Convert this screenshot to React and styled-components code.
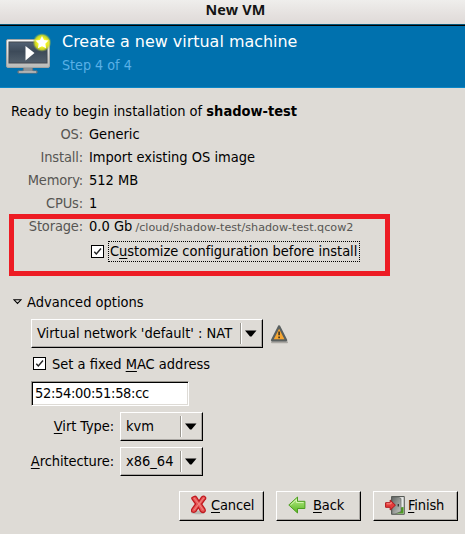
import React from "react";
import styled, { createGlobalStyle } from "styled-components";

const GlobalStyle = createGlobalStyle`
  * { box-sizing: border-box; }
  html, body { margin: 0; padding: 0; overflow: hidden; }
  body { background: #dedbd6; }
  svg { display: block; flex: none; }
`;

const Window = styled.div`
  width: 465px;
  height: 534px;
  display: flex;
  flex-direction: column;
  background: #dedbd6;
  color: #000;
  font: 14.5px/23px "DejaVu Sans Condensed", "DejaVu Sans", sans-serif;
  font-stretch: condensed;
  white-space: nowrap;
  overflow: hidden;
`;

const TitleBar = styled.div`
  height: 24px;
  flex: none;
  padding-left: 6px;
  text-align: center;
  background: linear-gradient(#efeeec, #e5e1df 60%, #dfdad8);
  font: bold 14.4px/20px "Noto Sans", sans-serif;
  letter-spacing: 0.2px;
  color: #141414;
`;

const Banner = styled.header`
  height: 64px;
  flex: none;
  display: flex;
  background: #0071ae;
  border-top: 1px solid #075577;
  box-shadow: inset 0 1px #000, inset 0 -1px #0b87c7;
  padding: 5px 0 0 4px;
`;

const BannerText = styled.div`
  margin-left: 10px;
  font-family: "DejaVu Sans", sans-serif;
  font-stretch: normal;
`;

const Heading = styled.h1`
  margin: 0;
  font-size: 15.95px;
  font-weight: normal;
  line-height: 23px;
  color: #fff;
`;

const Step = styled.div`
  font: 14.2px/22px "DejaVu Sans Condensed", "DejaVu Sans", sans-serif;
  font-stretch: condensed;
  margin-top: 1px;
  color: #59b0e6;
`;

const Content = styled.main`
  display: flex;
  flex-direction: column;
  height: 397px;
  padding-top: 12px;
`;

const Ready = styled.div`
  height: 23px;
  padding-left: 11px;
`;

const Row = styled.div`
  height: 23px;
  display: grid;
  grid-template-columns: 83px 1fr;
  column-gap: 6px;
`;

const Key = styled.span`
  text-align: right;
  letter-spacing: -0.15px;
  color: #575653;
`;

const Path = styled.small`
  font: 11.18px "DejaVu Sans", sans-serif;
  font-stretch: normal;
  margin-left: -1px;
  color: #575653;
`;

const Highlighted = styled.section`
  position: relative;
  height: 75px;
`;

const RedFrame = styled.div`
  position: absolute;
  left: 9px;
  top: -1px;
  width: 381px;
  height: 62px;
  border: 5px solid #ed1c24;
`;

const CheckLine = styled.label`
  display: flex;
  align-items: center;
  height: ${(p) => p.$height}px;
  padding-left: ${(p) => p.$indent}px;
  gap: ${(p) => p.$gap}px;
  margin-top: ${(p) => p.$top || 0}px;
`;

const CheckLabel = styled.span`
  line-height: 23px;
  padding-top: 1px;
`;

const Box = styled.span`
  width: 13px;
  height: 13px;
  flex: none;
  border: 1px solid #000;
  background: #fff;
`;

const Focus = styled.span`
  width: 252px;
  height: 21px;
  border: 1px dotted #000;
  padding-left: 1px;
  line-height: 19px;
  letter-spacing: -0.03px;
`;

const Mnemonic = styled.span`
  text-decoration: underline 1px;
  text-underline-offset: 2px;
  text-decoration-skip-ink: none;
`;

const Expander = styled.div`
  display: flex;
  align-items: center;
  height: 24px;
  padding-left: 13px;
  gap: 5px;
`;

const Line = styled.div`
  display: flex;
  align-items: center;
  height: ${(p) => p.$height}px;
  padding-left: ${(p) => p.$indent || 0}px;
  margin-top: ${(p) => p.$top}px;
`;

const FieldLabel = styled.span`
  width: 114px;
  margin-right: 6px;
  text-align: right;
  letter-spacing: -0.08px;
`;

const Raised = styled.span`
  display: flex;
  align-items: center;
  border-style: solid;
  border-width: 1px;
  border-color: #fff #000 #000 #fff;
  box-shadow: inset -1px -1px #aaa7a3;
`;

const Combo = styled(Raised)`
  width: ${(p) => p.$width}px;
  height: 29px;
  padding-left: 5px;
  justify-content: space-between;
`;

const ArrowCell = styled.span`
  display: flex;
  align-items: center;
  width: 22px;
  height: 21px;
  padding-left: 4px;
  border-left: 1px solid #99968f;
  box-shadow: inset 1px 0 #fff;
`;

const Entry = styled.div`
  width: 158px;
  height: 25px;
  margin: 6px 0 0 31px;
  padding-left: 3px;
  line-height: 23px;
  letter-spacing: -0.32px;
  background: #fff;
  border: 1px solid;
  border-color: #99968f #fff #fff #99968f;
  box-shadow: inset 1px 1px #000, inset -1px -1px #dedbd6;
`;

const Actions = styled.footer`
  display: flex;
  justify-content: flex-end;
  gap: 12px;
  padding: 6px 7px 0 0;
`;

const Button = styled(Raised)`
  width: 85px;
  height: 30px;
  padding: 0 0 2px 11px;
  gap: ${(p) => p.$gap}px;
  letter-spacing: -0.15px;
`;

const VmIcon = () => (
  <svg width="48" height="48" viewBox="4 30 48 48">
    <defs>
      <linearGradient id="screen" x1="0" y1="0" x2="0" y2="1">
        <stop stopColor="#526275" /><stop offset="0.45" stopColor="#3d4a59" /><stop offset="1" stopColor="#53606c" />
      </linearGradient>
      <linearGradient id="bezel" x1="0" y1="0" x2="0" y2="1">
        <stop stopColor="#f7f7f7" /><stop offset="1" stopColor="#b9bab7" />
      </linearGradient>
      <radialGradient id="glow">
        <stop offset="0.4" stopColor="#ffff20" /><stop offset="0.75" stopColor="#dfe41b" stopOpacity="0.85" /><stop offset="1" stopColor="#7ea558" stopOpacity="0" />
      </radialGradient>
    </defs>
    <path d="M24 67h8l1 4h4v2H18v-2h5z" fill="#8d9295" stroke="#74777a" />
    <path d="M19 72h17" stroke="#d4d5d3" />
    <rect x="6.5" y="39.5" width="43" height="28" rx="1.5" fill="url(#bezel)" stroke="#a1a5a5" />
    <rect x="9" y="42" width="38" height="21" fill="url(#screen)" stroke="#424951" />
    <path d="M25.5 46v14.5L34.5 53z" fill="#fff" />
    <circle cx="42" cy="42.5" r="9.5" fill="url(#glow)" />
    <path d="M42 36l2 4 4.5.6-3.2 3.1.8 4.6-4.1-2.1-4.1 2.1.8-4.6-3.2-3.1L40 40z" fill="#fff" />
  </svg>
);

const Check = () => (
  <Box>
    <svg width="11" height="11" viewBox="0 0 11 11">
      <path d="M2.3 5.8l2 2.2L9 2.5" fill="none" stroke="#222" strokeWidth="1.4" />
    </svg>
  </Box>
);

const ComboBox = ({ width, children }) => (
  <Combo $width={width}>
    {children}
    <ArrowCell>
      <svg width="12" height="7" viewBox="0 0 12 7"><path d="M0 .5h11.5L6.5 6.5h-1.5z" /></svg>
    </ArrowCell>
  </Combo>
);

const WarningIcon = () => (
  <svg width="20" height="20" viewBox="0 0 20 20">
    <path d="M2 18.3h15" stroke="#aaa7a2" strokeWidth="2" strokeLinecap="round" />
    <path d="M9.1 2.3L2 16.3h14.2z" fill="#f6a632" stroke="#5a6060" strokeWidth="2.2" strokeLinejoin="round" />
    <path d="M9.1 7.5v3.8M9.1 12.6v1.7" stroke="#352a1b" strokeWidth="1.5" />
  </svg>
);

const CancelIcon = () => (
  <svg width="16" height="20" viewBox="0 0 16 20">
    <ellipse cx="7" cy="17.5" rx="7" ry="1.7" fill="#bbb8b4" />
    <path d="M1.2 2.5Q4 .2 5.5 2.2L8 6l2.7-4Q13 .2 14.6 2.5q.5 1.5-1 2.5L10.6 9l3.2 4.8q1.4 3-1.5 3.7-1.8.2-2.8-1.4L7.4 12.4 5 16.2q-1.3 1.7-3.7.8-1.6-1.2-.1-3.4L4.6 9 1.3 4.4Q.4 3.3 1.2 2.5z" fill="#e95a5a" stroke="#c0181e" strokeWidth="1.3" />
    <path d="M3 3l4.9 6L3 15M12.8 3L8 9l4.1 6" fill="none" stroke="#f08a86" strokeWidth="0.9" />
  </svg>
);

const BackIcon = () => (
  <svg width="18" height="18" viewBox="0 0 18 18">
    <defs>
      <linearGradient id="leaf" x1="0" y1="0" x2="0" y2="1"><stop stopColor="#c0ee91" /><stop offset="1" stopColor="#54b51d" /></linearGradient>
    </defs>
    <path d="M.8 9L9.5 1v4.3h7.4v7.2H9.5V17z" fill="url(#leaf)" stroke="#4d9e20" strokeLinejoin="round" />
    <path d="M2.5 9l6-5.5v3h7" fill="none" stroke="#d2f5ad" />
  </svg>
);

const FinishIcon = () => (
  <svg width="20" height="19" viewBox="0 0 20 19">
    <defs>
      <linearGradient id="door" x1="0" y1="0" x2="1" y2="1"><stop stopColor="#626765" /><stop offset="1" stopColor="#c7cac4" /></linearGradient>
    </defs>
    <path d="M6.5.5h12.8v17.8H6.5z" fill="#ddd" stroke="#555954" />
    <path d="M12 2h6v10h-6z" fill="#e8ebe8" />
    <path d="M11 12l7.5-1v6.5H8z" fill="#4c9b20" />
    <path d="M7 1h6l3 1.5v13L10 18H7z" fill="url(#door)" stroke="#626561" strokeWidth=".7" />
    <path d="M13.3 8v2.5" stroke="#333" strokeWidth="1.3" />
    <path d="M.6 6.7h4.6V4l5.2 5.2L5.2 14v-2.7H.6z" fill="#e53b3b" stroke="#af171d" strokeLinejoin="round" />
    <path d="M1.5 7.8h4.6V6" fill="none" stroke="#ff9186" />
  </svg>
);

const details = [
  ["OS:", "Generic"],
  ["Install:", "Import existing OS image"],
  ["Memory:", "512 MB"],
  ["CPUs:", "1"],
];

export default function App() {
  return (
    <Window>
      <GlobalStyle />
      <TitleBar>New VM</TitleBar>
      <Banner>
        <VmIcon />
        <BannerText>
          <Heading>Create a new virtual machine</Heading>
          <Step>Step 4 of 4</Step>
        </BannerText>
      </Banner>
      <Content>
        <Ready>Ready to begin installation of <b>shadow-test</b></Ready>
        {details.map(([key, value]) => (
          <Row key={key}><Key>{key}</Key><span>{value}</span></Row>
        ))}
        <Highlighted>
          <Row>
            <Key>Storage:</Key>
            <span>0.0 Gb <Path>/cloud/shadow-test/shadow-test.qcow2</Path></span>
          </Row>
          <CheckLine $height={21} $indent={91} $gap={4} $top={3}>
            <Check />
            <Focus>C<Mnemonic>u</Mnemonic>stomize configuration before install</Focus>
          </CheckLine>
          <RedFrame />
        </Highlighted>
        <Expander>
          <svg width="9" height="6" viewBox="0 0 9 6"><path d="M1 .8h7L4.5 4.5z" fill="#dedbd6" stroke="#000" strokeWidth="1.1" /></svg>
          Advanced options
        </Expander>
        <Line $height={29} $indent={31} $top={5}>
          <ComboBox width={232}>Virtual network 'default' : NAT</ComboBox>
          <Line $height={29} $indent={7} $top={0}><WarningIcon /></Line>
        </Line>
        <CheckLine $height={23} $indent={33} $gap={6} $top={4}>
          <Check />
          <CheckLabel>Set a fixed <Mnemonic>M</Mnemonic>AC address</CheckLabel>
        </CheckLine>
        <Entry>52:54:00:51:58:cc</Entry>
        <Line $height={29} $top={6}>
          <FieldLabel><Mnemonic>V</Mnemonic>irt Type:</FieldLabel>
          <ComboBox width={83}>kvm</ComboBox>
        </Line>
        <Line $height={29} $top={6}>
          <FieldLabel><Mnemonic>A</Mnemonic>rchitecture:</FieldLabel>
          <ComboBox width={83}>x86_64</ComboBox>
        </Line>
      </Content>
      <Actions>
        <Button $gap={4}><CancelIcon /><span><Mnemonic>C</Mnemonic>ancel</span></Button>
        <Button $gap={7}><BackIcon /><span><Mnemonic>B</Mnemonic>ack</span></Button>
        <Button $gap={3}><FinishIcon /><span><Mnemonic>F</Mnemonic>inish</span></Button>
      </Actions>
    </Window>
  );
}
